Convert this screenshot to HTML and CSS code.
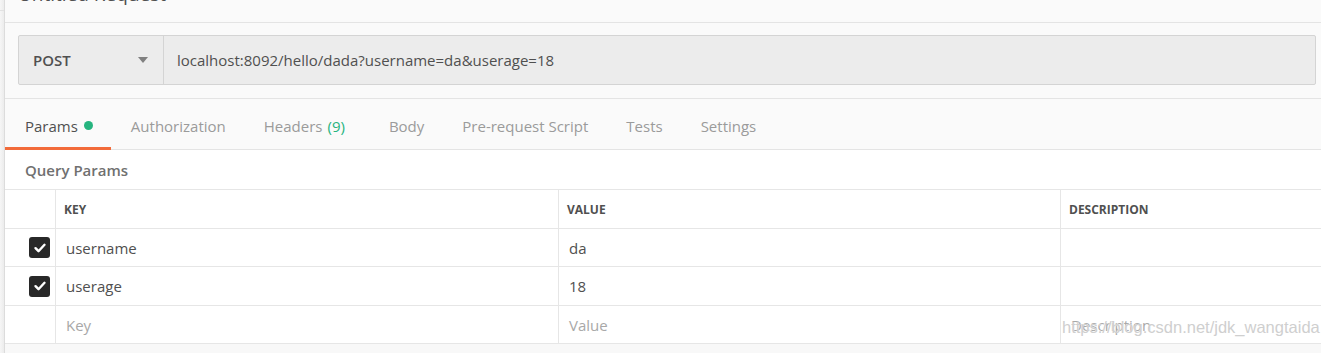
FILE: index.html
```html
<!DOCTYPE html>
<html lang="en">
<head>
  <meta charset="UTF-8">
  <title>Untitled Request</title>
  <link rel="stylesheet" href="styles.css">
</head>
<body>
  <div class="app">
    <!-- thin sidebar edge -->
    <div class="side-edge"><div class="side-line"></div></div>

    <div class="request-pane">
      <div class="title-bar">
        <div class="title">Untitled Request</div>
      </div>

      <div class="url-area">
        <div class="url-bar">
          <div class="method">
            <span>POST</span>
            <span class="caret"></span>
          </div>
          <div class="url">localhost:8092/hello/dada?username=da&amp;userage=18</div>
        </div>
      </div>

      <div class="tabs">
        <div class="tab active">Params <span class="dot"></span></div>
        <div class="tab">Authorization</div>
        <div class="tab headers">Headers <span class="count">(9)</span></div>
        <div class="tab">Body</div>
        <div class="tab">Pre-request Script</div>
        <div class="tab">Tests</div>
        <div class="tab">Settings</div>
      </div>

      <div class="params">
        <div class="section-title">Query Params</div>
        <div class="table">
          <div class="row head">
            <div class="cell check"></div>
            <div class="cell">KEY</div>
            <div class="cell">VALUE</div>
            <div class="cell">DESCRIPTION</div>
          </div>
          <div class="row short">
            <div class="cell check"><span class="box"><svg viewBox="0 0 20 20" width="20" height="20"><path d="M5.5 10.2l3 3 6-6.4" fill="none" stroke="#fff" stroke-width="2.4" stroke-linecap="round" stroke-linejoin="round"/></svg></span></div>
            <div class="cell text">username</div>
            <div class="cell text">da</div>
            <div class="cell text"></div>
          </div>
          <div class="row">
            <div class="cell check"><span class="box"><svg viewBox="0 0 20 20" width="20" height="20"><path d="M5.5 10.2l3 3 6-6.4" fill="none" stroke="#fff" stroke-width="2.4" stroke-linecap="round" stroke-linejoin="round"/></svg></span></div>
            <div class="cell text">userage</div>
            <div class="cell text">18</div>
            <div class="cell text"></div>
          </div>
          <div class="row short">
            <div class="cell check"></div>
            <div class="cell text placeholder">Key</div>
            <div class="cell text placeholder">Value</div>
            <div class="cell text placeholder">Description</div>
          </div>
        </div>
      </div>
    </div>
  </div>

  <div class="watermark">https://blog.csdn.net/jdk_wangtaida</div>
</body>
</html>
```

FILE: styles.css
```css
/* Base */
* {
  margin: 0;
  padding: 0;
  box-sizing: border-box;
}
body {
  width: 1321px;
  height: 353px;
  overflow: hidden;
  background: #f8f8f8;
  font-family: 'Open Sans', sans-serif;
  color: #505050;
  position: relative;
}

.app {
  display: flex;
  height: 100%;
}

/* Sidebar edge on the left */
.side-edge {
  width: 5px;
  background: linear-gradient(to right, #f6f6f6, #ececec);
  border-right: 1px solid #dcdcdc;
  flex-shrink: 0;
}
.side-line {
  margin-top: 10px;
  border-top: 1px solid #e2e2e2;
}

.request-pane {
  flex: 1;
  display: flex;
  flex-direction: column;
}

/* Title */
.title-bar {
  height: 23px;
  background: #fafafa;
  border-bottom: 1px solid #e4e4e4;
  overflow: hidden;
}
.title {
  font-size: 19px;
  color: #505050;
  padding-left: 13px;
  margin-top: -19px;
  line-height: 26px;
}

/* URL bar */
.url-area {
  background: #fafafa;
  padding: 12px 5px 13px 13px;
  border-bottom: 1px solid #e4e4e4;
}
.url-bar {
  display: flex;
  height: 50px;
  background: #ececec;
  border: 1px solid #d4d4d4;
  border-radius: 2px;
  font-size: 15px;
}
.method {
  width: 145px;
  flex-shrink: 0;
  display: flex;
  align-items: center;
  justify-content: space-between;
  padding: 0 15px 0 14px;
  border-right: 1px solid #d4d4d4;
  font-weight: 600;
  color: #505050;
}
.caret {
  width: 0;
  height: 0;
  border-left: 5px solid transparent;
  border-right: 5px solid transparent;
  border-top: 6px solid #808080;
}
.url {
  display: flex;
  align-items: center;
  padding-left: 13px;
  color: #505050;
}

/* Tabs */
.tabs {
  display: flex;
  height: 51px;
  background: #fafafa;
  border-bottom: 1px solid #e4e4e4;
  font-size: 15px;
}
.tab {
  display: flex;
  align-items: center;
  padding: 5px 18px 0 20px;
  color: #9b9b9b;
  border-bottom: 3px solid transparent;
  margin-bottom: -1px;
}
.tab.active {
  color: #505050;
  border-bottom-color: #f26b3a;
}
.tab.headers {
  padding-right: 24px;
}
.dot {
  width: 9px;
  height: 9px;
  border-radius: 50%;
  background: #26b47f;
  margin-left: 6px;
}
.count {
  color: #26b47f;
  margin-left: 5px;
}

/* Params table */
.params {
  background: #fff;
}
.section-title {
  height: 40px;
  padding-left: 20px;
  display: flex;
  align-items: center;
  font-size: 15px;
  font-weight: 600;
  color: #707070;
}
.table {
  border-top: 1px solid #e6e6e6;
  margin-top: -1px;
}
.row {
  display: grid;
  grid-template-columns: 50px 503px 502px 1fr;
  height: 39px;
  border-bottom: 1px solid #e6e6e6;
}
.row.short {
  height: 38px;
}
.cell {
  display: flex;
  align-items: center;
  padding-left: 8px;
  border-left: 1px solid #e6e6e6;
}
.cell.check {
  border-left: none;
  padding-left: 24px;
}
.head .cell {
  font-size: 12px;
  font-weight: 700;
  color: #505050;
}
.cell.text {
  padding-left: 10px;
  font-size: 15px;
  color: #505050;
}
.cell.placeholder {
  color: #a8a8a8;
}
.box {
  width: 21px;
  height: 21px;
  border-radius: 3px;
  background: #282828;
  display: flex;
  align-items: center;
  justify-content: center;
}

/* CSDN watermark over the last row */
.watermark {
  position: absolute;
  left: 1062px;
  top: 318px;
  white-space: nowrap;
  font-family: 'Liberation Sans', Arial, sans-serif;
  font-size: 16.5px;
  color: #cfcfcf;
  text-shadow: 0 0 1px #fff;
}
```
